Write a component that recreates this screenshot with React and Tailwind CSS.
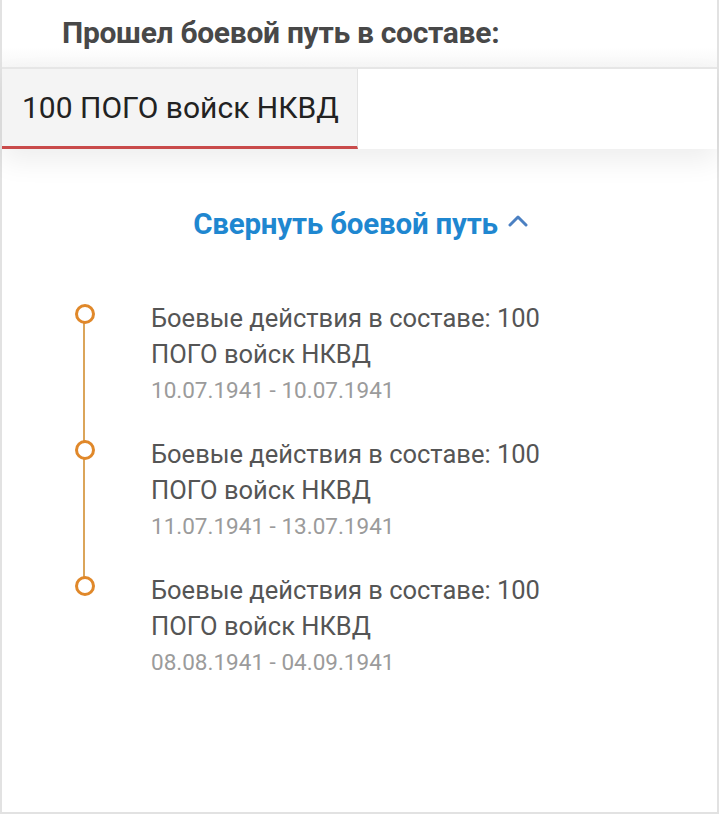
import React from 'react'

const items = [
  { title: 'Боевые действия в составе: 100 ПОГО войск НКВД', dates: '10.07.1941 - 10.07.1941' },
  { title: 'Боевые действия в составе: 100 ПОГО войск НКВД', dates: '11.07.1941 - 13.07.1941' },
  { title: 'Боевые действия в составе: 100 ПОГО войск НКВД', dates: '08.08.1941 - 04.09.1941' },
]

const CombatPath = () => {
  return (
    <div className="w-[719px] h-[814px] bg-white font-['Roboto',sans-serif] overflow-hidden">
      <div className="h-full border-x-2 border-b-2 border-[#e2e2e2] flex flex-col">
        {/* Header */}
        <div className="h-[67px] flex items-center pl-[60px] pb-[2px] bg-gradient-to-b from-white from-70% to-[#f7f7f7]">
          <h2 className="text-[30px] font-bold text-[#484848] tracking-[-0.3px]">Прошел боевой путь в составе:</h2>
        </div>

        {/* Tabs */}
        <div className="relative z-10 h-[82px] flex border-t-2 border-[#e6e6e6] bg-white shadow-[0_12px_28px_rgba(0,0,0,0.07)]">
          <div className="w-[356px] flex items-center pl-[20px] bg-[#f4f4f4] border-r border-[#e3e3e3] border-b-[3px] border-b-[#c94b4b]">
            <span className="text-[30px] text-[#222]">100 ПОГО войск НКВД</span>
          </div>
        </div>

        {/* Body */}
        <div className="flex-1 flex flex-col">
          <div className="flex justify-center items-center gap-[10px] pt-[53px] pl-[2px]">
            <span className="text-[29.5px] font-bold text-[#1f87d0] tracking-[-0.2px]">Свернуть боевой путь</span>
            <svg width="20" height="14" viewBox="0 0 20 14" className="mt-[-6px]">
              <path d="M2 11 L10 3 L18 11" fill="none" stroke="#4b80c2" strokeWidth="3" strokeLinecap="round" strokeLinejoin="round" />
            </svg>
          </div>

          <div className="relative mt-[54px] pl-[149px] flex flex-col gap-[28px]">
            <div className="absolute left-[81px] top-[14px] h-[272px] w-[2px] bg-[#dba55a]" />
            {items.map((it, i) => (
              <div key={i} className="relative w-[420px]">
                <div className="absolute left-[-76px] top-[4px] w-[20px] h-[20px] rounded-full border-[3.5px] border-[#e0882a] bg-white" />
                <p className="text-[25.5px] leading-[36px] text-[#555]">{it.title}</p>
                <p className="text-[22.5px] leading-[36px] text-[#9b9b9b]">{it.dates}</p>
              </div>
            ))}
          </div>
        </div>
      </div>
    </div>
  )
}

export default function App() {
  return <CombatPath />
}
